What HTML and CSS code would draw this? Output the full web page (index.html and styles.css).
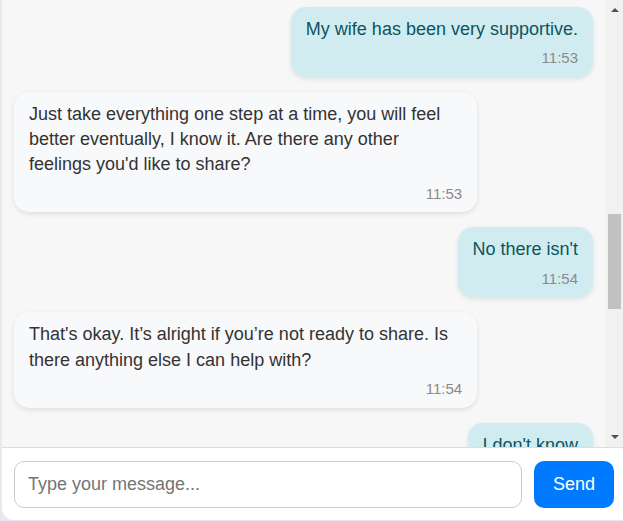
FILE: index.html
```html
<!DOCTYPE html>
<html lang="en">
<head>
<meta charset="utf-8">
<title>Chat</title>
<link rel="stylesheet" href="styles.css">
</head>
<body>
<div class="app">
  <div class="chat-body">
    <div class="messages">
      <div class="msg user">
        <div class="text">My wife has been very supportive.</div>
        <div class="time">11:53</div>
      </div>
      <div class="msg bot">
        <div class="text">Just take everything one step at a time, you will feel better eventually, I know it. Are there any other feelings you'd like to share?</div>
        <div class="time">11:53</div>
      </div>
      <div class="msg user">
        <div class="text">No there isn't</div>
        <div class="time">11:54</div>
      </div>
      <div class="msg bot">
        <div class="text">That's okay. It’s alright if you’re not ready to share. Is there anything else I can help with?</div>
        <div class="time">11:54</div>
      </div>
      <div class="msg user">
        <div class="text">I don't know</div>
        <div class="time">11:54</div>
      </div>
    </div>
    <div class="scrollbar">
      <div class="arrow up"></div>
      <div class="track"><div class="thumb"></div></div>
      <div class="arrow down"></div>
    </div>
  </div>
  <div class="composer">
    <input class="input" type="text" placeholder="Type your message...">
    <button class="send" type="button">Send</button>
  </div>
</div>
</body>
</html>
```
FILE: styles.css
```css
* { box-sizing: border-box; }

html, body {
  margin: 0;
  padding: 0;
  height: 100%;
}

body {
  background: #e9e8f1;
  font-family: "Liberation Sans", Arial, sans-serif;
  overflow: hidden;
}

.app {
  margin-left: 2px;
  width: 621px;
  height: 520px;
  background: #ffffff;
  border-bottom-left-radius: 12px;
  overflow: hidden;
  display: flex;
  flex-direction: column;
}

.chat-body {
  height: 448px;
  display: flex;
  background: #f7f7f7;
  border-bottom: 1px solid #dddddd;
}

.messages {
  flex: 1;
  overflow: hidden;
  padding: 7px 13px 0 12px;
  display: flex;
  flex-direction: column;
}

.msg {
  flex-shrink: 0;
  max-width: 80%;
  padding: 10px 15px;
  margin-bottom: 15px;
  border-radius: 15px;
  box-shadow: 0 2px 5px rgba(0, 0, 0, 0.1);
  font-size: 18px;
  line-height: 1.4;
}

.msg.user {
  align-self: flex-end;
  background: #d1ecf1;
  color: #0c5460;
}

.msg.bot {
  align-self: flex-start;
  background: #f8f9fb;
  color: #333333;
}

.time {
  margin-top: 8px;
  font-size: 15px;
  line-height: 16.8px;
  color: #8a8a8a;
  text-align: right;
}

.scrollbar {
  width: 17px;
  flex-shrink: 0;
  background: #f1f1f1;
  display: flex;
  flex-direction: column;
}

.arrow {
  height: 17px;
  display: flex;
  align-items: center;
  justify-content: center;
}

.arrow::before {
  content: "";
  width: 0;
  height: 0;
  border-left: 4px solid transparent;
  border-right: 4px solid transparent;
}

.arrow.up::before {
  border-bottom: 4px solid #505050;
  margin-top: 2px;
}

.arrow.down::before {
  border-top: 4px solid #505050;
  margin-top: -4px;
}

.track {
  flex: 1;
  padding: 0 2px;
}

.thumb {
  margin-top: 197px;
  height: 95px;
  background: #c1c1c1;
}

.composer {
  flex: 1;
  display: flex;
  gap: 12px;
  padding: 13px 9px 12px 12px;
  align-items: flex-start;
}

.input {
  flex: 1;
  height: 47px;
  border: 1px solid #cccccc;
  border-radius: 10px;
  padding: 0 13px;
  font-family: inherit;
  font-size: 18px;
  color: #333333;
  background: #ffffff;
  outline: none;
}

.input::placeholder {
  color: #757575;
}

.send {
  width: 80px;
  height: 47px;
  border: none;
  border-radius: 10px;
  background: #007bff;
  color: #ffffff;
  font-family: inherit;
  font-size: 18px;
  cursor: pointer;
}
```
